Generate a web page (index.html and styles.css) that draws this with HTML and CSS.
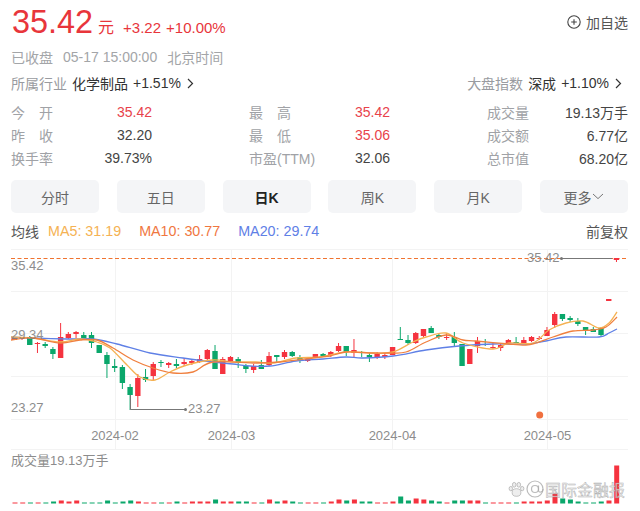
FILE: index.html
```html
<!DOCTYPE html>
<html lang="zh-CN">
<head>
<meta charset="utf-8">
<title>35.42</title>
<link rel="stylesheet" href="styles.css">
</head>
<body>
<main class="page">
  <header class="quote">
    <div class="price-row">
      <div class="price-main">
        <span class="price">35.42</span><span class="unit">元</span>
        <span class="change">+3.22</span><span class="change">+10.00%</span>
      </div>
      <div class="watch">
        <svg class="watch-icon" width="14" height="14" viewBox="0 0 14 14"><circle cx="7" cy="7" r="6.2"/><path d="M7 4.2v5.6M4.2 7h5.6"/></svg>
        <span>加自选</span>
      </div>
    </div>
    <div class="status-row">
      <span>已收盘</span><span>05-17 15:00:00</span><span>北京时间</span>
    </div>
    <div class="sector-row">
      <div class="sector">
        <span class="muted">所属行业</span><span class="strong">化学制品</span><span class="strong">+1.51%</span>
        <svg class="chev" width="7" height="11" viewBox="0 0 7 11"><path d="M1 1l4.5 4.5L1 10"/></svg>
      </div>
      <div class="sector sector-end">
        <span class="muted">大盘指数</span><span class="strong">深成</span><span class="strong">+1.10%</span>
        <svg class="chev" width="7" height="11" viewBox="0 0 7 11"><path d="M1 1l4.5 4.5L1 10"/></svg>
      </div>
    </div>
    <div class="stats">
      <div class="stat"><span class="label spread"><i>今</i><i>开</i></span><span class="val red">35.42</span></div>
      <div class="stat"><span class="label spread"><i>最</i><i>高</i></span><span class="val red">35.42</span></div>
      <div class="stat"><span class="label">成交量</span><span class="val">19.13万手</span></div>
      <div class="stat"><span class="label spread"><i>昨</i><i>收</i></span><span class="val">32.20</span></div>
      <div class="stat"><span class="label spread"><i>最</i><i>低</i></span><span class="val red">35.06</span></div>
      <div class="stat"><span class="label">成交额</span><span class="val">6.77亿</span></div>
      <div class="stat"><span class="label">换手率</span><span class="val">39.73%</span></div>
      <div class="stat"><span class="label">市盈(TTM)</span><span class="val">32.06</span></div>
      <div class="stat"><span class="label">总市值</span><span class="val">68.20亿</span></div>
    </div>
  </header>
  <nav class="tabs">
    <div class="tab">分时</div>
    <div class="tab">五日</div>
    <div class="tab active">日K</div>
    <div class="tab">周K</div>
    <div class="tab">月K</div>
    <div class="tab">更多<svg class="more" width="12" height="7" viewBox="0 0 12 7"><path d="M1 1l5 4.6L11 1"/></svg></div>
  </nav>
  <div class="legend">
    <div class="legend-left">
      <span class="legend-title">均线</span>
      <span class="ma5">MA5: 31.19</span>
      <span class="ma10">MA10: 30.77</span>
      <span class="ma20">MA20: 29.74</span>
    </div>
    <span class="legend-title">前复权</span>
  </div>
  <div class="chart">
    <svg id="kline" class="kline" width="640" height="262" viewBox="0 249 640 262" xmlns="http://www.w3.org/2000/svg"></svg>
    <div class="watermark">
      <svg width="17" height="17" viewBox="0 0 17 17"><g class="wm-shape"><ellipse cx="8.5" cy="11.5" rx="4.4" ry="3.8"/><ellipse cx="2.8" cy="7.6" rx="1.7" ry="2.2"/><ellipse cx="6.2" cy="3.8" rx="1.8" ry="2.4"/><ellipse cx="10.8" cy="3.8" rx="1.8" ry="2.4"/><ellipse cx="14.2" cy="7.6" rx="1.7" ry="2.2"/></g></svg>
      <svg width="18" height="18" viewBox="0 0 18 18"><g class="wm-ring"><circle cx="9" cy="9" r="8"/><circle cx="9" cy="9" r="3.5"/><path d="M12.5 5.5v5c0 2.6 4.5 2 4.5-1.5"/></g></svg>
      <span class="wm-text">国际金融报</span>
    </div>
  </div>
</main>
<script src="chart.js"></script>
</body>
</html>
```

FILE: styles.css
```css
* { box-sizing: border-box; }
html, body { margin: 0; padding: 0; background: #fff; }
body {
  width: 640px;
  height: 511px;
  overflow: hidden;
  font-family: "Liberation Sans", "Noto Sans CJK SC", sans-serif;
  font-size: 14px;
  color: #333;
}
.page { padding: 0 12px 0 11px; }
.price-row { height: 44px; display: flex; justify-content: space-between; align-items: center; }
.price-main { display: flex; align-items: baseline; padding-left: 1px; }
.price { font-size: 32.4px; color: #e8353b; }
.unit { font-size: 16px; color: #e8353b; margin-left: 5px; margin-right: 9px; }
.change { font-size: 15px; color: #e8353b; margin-right: 5px; }
.watch { display: flex; align-items: center; gap: 5px; color: #555; }
.watch-icon circle, .watch-icon path { fill: none; stroke: #444; stroke-width: 1.1; }
.status-row { height: 26px; display: flex; align-items: center; gap: 10px; color: #a3a5a8; }
.sector-row { height: 26px; display: flex; justify-content: space-between; align-items: center; }
.sector { display: flex; align-items: center; gap: 5px; }
.sector-end { margin-right: 6px; }
.muted { color: #999ba0; }
.strong { color: #333; }
.chev { margin-left: 1px; }
.chev path { fill: none; stroke: #333; stroke-width: 1.2; }
.stats {
  margin-top: 4px;
  display: grid;
  grid-template-columns: repeat(3, 141px);
  grid-auto-rows: 23px;
  justify-content: space-between;
}
.stat { display: flex; justify-content: space-between; align-items: center; }
.label { color: #a0a2a6; }
.spread { width: 42px; display: flex; justify-content: space-between; }
.spread i { font-style: normal; }
.val { color: #444; }
.red { color: #e8434b; }
.tabs {
  margin-top: 11px;
  display: grid;
  grid-template-columns: repeat(6, 88px);
  justify-content: space-between;
}
.tab {
  height: 33px;
  border-radius: 5px;
  background: #f4f5f7;
  color: #666;
  display: flex;
  align-items: center;
  justify-content: center;
}
.tab.active { color: #222; font-weight: 700; }
.more { margin-left: 1px; }
.more path { fill: none; stroke: #777; stroke-width: 1; }
.legend { margin-top: 6px; height: 24px; display: flex; justify-content: space-between; align-items: center; }
.legend-left { display: flex; align-items: center; gap: 18px; font-size: 14.3px; }
.legend-left .legend-title { margin-right: -9px; font-size: 14px; }
.legend-title { color: #555; }
.ma5 { color: #f5b253; }
.ma10 { color: #f0773f; }
.ma20 { color: #5f80e6; }
.chart { position: relative; margin: 6px -12px 0 -11px; height: 262px; }
.kline { display: block; }
.ax { font-size: 13px; fill: #8c8c8c; font-family: "Liberation Sans", sans-serif; }
.ax-dim { fill: #808080; opacity: .85; }
.vol-title { font-size: 13px; fill: #8c8c8c; font-family: "Liberation Sans", "Noto Sans CJK SC", sans-serif; }
.watermark {
  position: absolute;
  left: 508px;
  top: 228px;
  display: flex;
  align-items: center;
  gap: 1px;
}
.wm-shape { fill: rgba(235, 235, 235, .85); stroke: rgba(150, 150, 150, .7); stroke-width: .8; }
.wm-ring { fill: none; stroke: rgba(170, 170, 170, .8); stroke-width: 1.2; }
.wm-text {
  font-size: 16px;
  color: rgba(225, 225, 225, .75);
  -webkit-text-stroke: .4px rgba(140, 140, 140, .7);
}
```

FILE: chart.js
```js
(function () {
  var svg = document.getElementById('kline');
  var NS = 'http://www.w3.org/2000/svg';
  var RED = '#f5333f', GREEN = '#0aa76b';
  function add(name, attrs, text) {
    var el = document.createElementNS(NS, name);
    for (var k in attrs) el.setAttribute(k, attrs[k]);
    if (text) el.textContent = text;
    svg.appendChild(el);
    return el;
  }
  [249.5, 291.5, 333.5, 376.5, 419.5, 449.5].forEach(function (y) {
    add('line', { x1: 11, x2: 628, y1: y, y2: y, stroke: '#f3f3f3' });
  });
  [115.5, 231.5, 392.5, 547.5].forEach(function (x) {
    add('line', { x1: x, x2: x, y1: 249, y2: 449, stroke: '#f3f3f3' });
  });
  add('line', { x1: 11, x2: 628, y1: 258.5, y2: 258.5, stroke: '#f0732f', 'stroke-dasharray': '4 2.5' });
  add('line', { x1: 561, x2: 612, y1: 258.5, y2: 258.5, stroke: '#777' });
  // color, body top, body bottom, wick top, wick bottom
  var K = [
    'r337,340,337,340','r338,339,338,340','g338,345,336,345','r343,344,342,353','g344,346,342,348',
    'g349,354,347,359','r337,358,323,358','r334,338,332,339','r332,334,331,338','g335,338,332,339',
    'g335,343,332,348','g345,353,345,353','g355,364,352,378','g366,368,359,372','g367,383,365,389',
    'g387,395,384,410','r378,396,374,407','g377,380,369,382','r364,376,362,380','g362,363,360,367',
    'r363,365,362,368','g364,366,359,368','r362,364,358,366','r361,363,360,365','r359,362,355,363',
    'r350,359,349,360','g351,369,345,369','r359,374,357,374','r357,361,356,362','g359,363,357,368',
    'g366,369,364,373','r366,370,364,373','g365,369,360,369','r356,365,352,366','g355,357,355,362',
    'r352,357,350,359','g352,356,351,357','g357,360,355,363','r359,361,357,362','r354,357,354,357',
    'g354,356,353,357','r352,355,351,357','r346,351,343,352','g346,352,346,356','r350,353,339,357',
    'g352,353,351,357','g355,357,353,362','r354,357,352,359','r355,357,353,359','r347,355,347,355',
    'g339,340,327,340','g340,343,335,345','r333,343,332,344','r329,336,329,337','g328,333,326,333',
    'g335,337,333,339','r337,338,333,340','g337,343,332,346','g344,366,344,366','r349,364,349,364',
    'r341,346,337,353','g344,345,339,346','r347,348,343,349','r345,348,343,351','r340,343,339,344',
    'g342,343,337,343','r340,343,337,343','r337,341,336,342','r338,339,336,340','r330,336,327,336',
    'r314,325,312,328','g314,319,314,321','g318,320,316,322','g321,324,318,326','g327,331,327,335',
    'g329,332,327,332','g328,335,327,336','r299,301,299,301','r258,260,258,262'
  ];
  function xAt(i) { return 14.3 + 7.72 * i; }
  K.forEach(function (s, i) {
    var c = s[0] === 'r' ? RED : GREEN;
    var v = s.slice(1).split(',').map(Number);
    var x = xAt(i);
    add('line', { x1: x, x2: x, y1: v[2], y2: v[3], stroke: c, 'stroke-width': 1 });
    add('rect', { x: x - 2.7, y: v[0], width: 5.4, height: Math.max(1, v[1] - v[0]), fill: c });
  });
  function smooth(p) {
    var d = 'M' + p[0][0] + ' ' + p[0][1];
    for (var i = 0; i < p.length - 1; i++) {
      var a = p[i - 1] || p[i], b = p[i], c = p[i + 1], e = p[i + 2] || c;
      d += 'C' + (b[0] + (c[0] - a[0]) / 6).toFixed(1) + ' ' + (b[1] + (c[1] - a[1]) / 6).toFixed(1) + ' ' +
        (c[0] - (e[0] - b[0]) / 6).toFixed(1) + ' ' + (c[1] - (e[1] - b[1]) / 6).toFixed(1) + ' ' + c[0] + ' ' + c[1];
    }
    return d;
  }
  var ma20 = [[11,337],[33,338],[67,339],[93,339],[117,344],[150,353],[183,358],[213,362],[233,364],[250,366],[270,366],[296,361],[323,359],[346,357],[363,358],[393,356],[426,350],[459,346],[493,344],[526,344],[546,341],[566,337],[599,337],[609,333],[617,329]];
  var ma10 = [[11,340],[33,338],[60,343],[80,340],[97,340],[113,348],[133,360],[153,368],[173,373],[193,372],[213,362],[256,363],[280,362],[313,358],[330,356],[346,352],[370,353],[390,353],[406,352],[426,342],[446,335],[463,340],[476,341],[509,344],[526,345],[536,343],[553,337],[573,331],[593,330],[606,327],[617,317]];
  var ma5 = [[11,337],[33,338],[60,342],[80,339],[97,342],[110,348],[127,365],[140,377],[155,380],[170,372],[187,365],[213,360],[233,362],[256,362],[273,363],[296,358],[320,357],[346,352],[373,353],[393,352],[413,342],[426,337],[446,333],[463,343],[493,349],[509,343],[533,343],[549,330],[566,323],[583,321],[599,328],[609,323],[617,312]];
  [[ma20, '#5f80e6'], [ma5, '#f5b253'], [ma10, '#f0803f']].forEach(function (m) {
    add('path', { d: smooth(m[0]), fill: 'none', stroke: m[1], 'stroke-width': 1.3 });
  });
  add('text', { x: 11, y: 270, class: 'ax' }, '35.42');
  add('text', { x: 11, y: 339, class: 'ax ax-dim' }, '29.34');
  add('text', { x: 11, y: 412, class: 'ax' }, '23.27');
  // price extremes
  add('text', { x: 527, y: 262, class: 'ax' }, '35.42');
  add('circle', { cx: 561.5, cy: 258.5, r: 1.5, fill: '#777' });
  add('path', { d: 'M130.5 395V409.5H185', fill: 'none', stroke: '#777', 'stroke-width': 1 });
  add('circle', { cx: 185.5, cy: 409.5, r: 1.5, fill: '#777' });
  add('text', { x: 188, y: 413, class: 'ax' }, '23.27');
  add('circle', { cx: 539.7, cy: 415, r: 3.5, fill: '#f0703f' });
  // x axis
  [[115, '2024-02'], [231.5, '2024-03'], [392.5, '2024-04'], [547.5, '2024-05']].forEach(function (t) {
    add('text', { x: t[0], y: 440, 'text-anchor': 'middle', class: 'ax' }, t[1]);
  });
  add('text', { x: 11, y: 465, class: 'vol-title' }, '成交量19.13万手');
  // volume
  var all = 'rrgrggrrrgggggggrrrgrgrrrrgrrggrgrgrggrr' + 'grrgrggrrrggrrggrggrrgrrrgrrrrrggggggrr';
  var hs = [1,1,1,1,1,2,3,2,3,1,1,1,3,1,2,3,2,1,1,1,1,2,1,2,2,2,4,2,2,2,2,1,1,4,2,3,2,1,1,1,
            1,2,4,3,4,2,2,1,1,2,7,3,5,4,3,2,1,3,3,3,3,1,1,1,1,1,2,2,2,3,10,5,4,2,1,1,2,3,38];
  hs.forEach(function (h, i) {
    add('rect', { x: 15 + (616.7 - 15) / 78 * i - 2.5, y: 503.5 - h, width: 5, height: h, fill: all[i] === 'r' ? RED : GREEN });
  });
})();
```
